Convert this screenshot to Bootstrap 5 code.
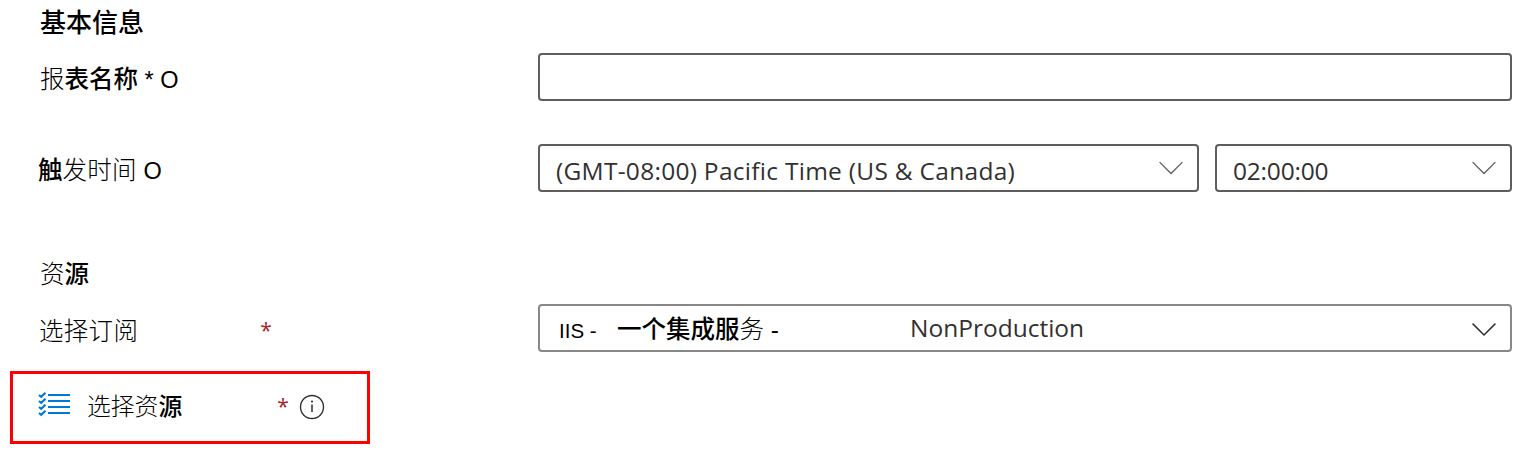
<!DOCTYPE html>
<html lang="zh-CN">
<head>
<meta charset="utf-8">
<meta name="viewport" content="width=device-width, initial-scale=1">
<title>基本信息</title>
<link href="https://cdn.jsdelivr.net/npm/bootstrap@5.3.0/dist/css/bootstrap.min.css" rel="stylesheet">
<style>
body{font-family:"Liberation Sans","Noto Sans CJK SC",sans-serif;color:#000;background:#fff;height:458px;overflow:hidden}
.line{white-space:pre;line-height:36px;font-size:24.5px;font-weight:500}
.line .thin{font-weight:300;font-family:"Noto Sans CJK SC",sans-serif}
.line .latin{font-weight:400;font-size:23.5px}
.form-row{height:48px;padding-right:14px}
.field-label{width:538px;flex:none}
.field{height:48px;border:2px solid #605e5c;border-radius:4px;background:#fff;padding:0 14px 0 16px;color:#323130}
.field.soft{border-color:#8a8886}
.ui-text{font-family:"Open Sans","Noto Sans",sans-serif;font-size:24.5px;line-height:44px;white-space:pre}
.zone{width:661px;flex:none}
.zone .ui-text{letter-spacing:.28px}
.req{color:#a4262c;font-family:"Open Sans",sans-serif;font-weight:400;font-size:21px;line-height:36px}
.picker{width:360px;height:73px;border:3px solid #f00;margin:19px 0 0 10px}
</style>
</head>
<body>
<main class="d-flex flex-column">
  <h1 class="line mb-0" style="padding-left:40px;margin-top:5px;font-size:26px">基本信息</h1>
  <div class="form-row d-flex" style="margin-top:12px">
    <label class="field-label line" for="reportName" style="padding:7px 0 0 40px"><span class="thin">报</span>表名称<span class="latin"> * O</span></label>
    <input id="reportName" class="form-control field flex-fill shadow-none" type="text">
  </div>
  <div class="form-row d-flex" style="margin-top:43px">
    <div class="field-label line" style="padding:7px 0 0 38px">触<span class="thin" style="letter-spacing:.3px">发时间</span><span class="latin"> O</span></div>
    <div class="field zone d-flex justify-content-between">
      <span class="ui-text" style="padding-top:3px">(GMT-08:00) Pacific Time (US &amp; Canada)</span>
      <svg style="margin-top:15px" width="24" height="14" viewBox="0 0 24 14" fill="none" stroke="#605e5c" stroke-width="1.3"><path d="M.6 1.100 12 12.500 23.400 1.100"/></svg>
    </div>
    <div class="field flex-fill d-flex justify-content-between" style="margin-left:16px">
      <span class="ui-text" style="padding-top:3px;letter-spacing:-.2px">02:00:00</span>
      <svg style="margin-top:15px" width="24" height="14" viewBox="0 0 24 14" fill="none" stroke="#605e5c" stroke-width="1.3"><path d="M.6 1.100 12 12.500 23.400 1.100"/></svg>
    </div>
  </div>
  <h2 class="line mb-0" style="padding-left:40px;margin-top:63px"><span class="thin">资</span>源</h2>
  <div class="form-row d-flex" style="margin-top:11px">
    <div class="field-label line d-flex" style="padding:8px 0 0 39px"><span class="thin" style="letter-spacing:.3px">选择订阅</span><span class="req" style="margin-left:122px">*</span></div>
    <div class="field soft flex-fill d-flex">
      <span class="line" style="font-size:20.5px;width:61px;padding:7px 0 0 3px;color:#000;font-weight:400">IIS -</span>
      <span class="line" style="padding-top:4px;width:293px;color:#000">一个集成服<span class="thin">务</span> -</span>
      <span class="ui-text">NonProduction</span>
      <svg class="ms-auto" style="margin-top:17px" width="24" height="14" viewBox="0 0 24 14" fill="none" stroke="#323130" stroke-width="1.5"><path d="M.6.6 12 12 23.4.6"/></svg>
    </div>
  </div>
  <div class="picker d-flex">
    <svg style="margin:17px 0 0 25px" width="33" height="27" viewBox="0 0 33 27" fill="none" stroke="#0078d4" stroke-width="2"><path d="M10 4h22M10 10h22M10 16h22M10 22h22"/><path stroke-width="2.200" d="m1 4 2.200 1.800L7.500 1.800M1 10l2.200 1.800L7.500 7.800M1 16l2.200 1.800 4.300-4M1 22l2.200 1.800 4.300-4"/></svg>
    <span class="line" style="font-size:23.8px;margin:13px 0 0 16px"><span class="thin">选择资</span>源</span>
    <span class="req" style="margin:14px 0 0 95px">*</span>
    <svg style="margin:20px 0 0 10px" width="26" height="26" viewBox="0 0 26 26" fill="none" stroke="#323130"><circle cx="13" cy="13" r="11.500" stroke-width="1.400"/><path d="M13 10.500V18" stroke-width="1.500"/><circle cx="13" cy="7.500" r="1.100" fill="#323130" stroke="none"/></svg>
  </div>
</main>
<script src="https://cdn.jsdelivr.net/npm/bootstrap@5.3.0/dist/js/bootstrap.bundle.min.js"></script>
</body>
</html>
